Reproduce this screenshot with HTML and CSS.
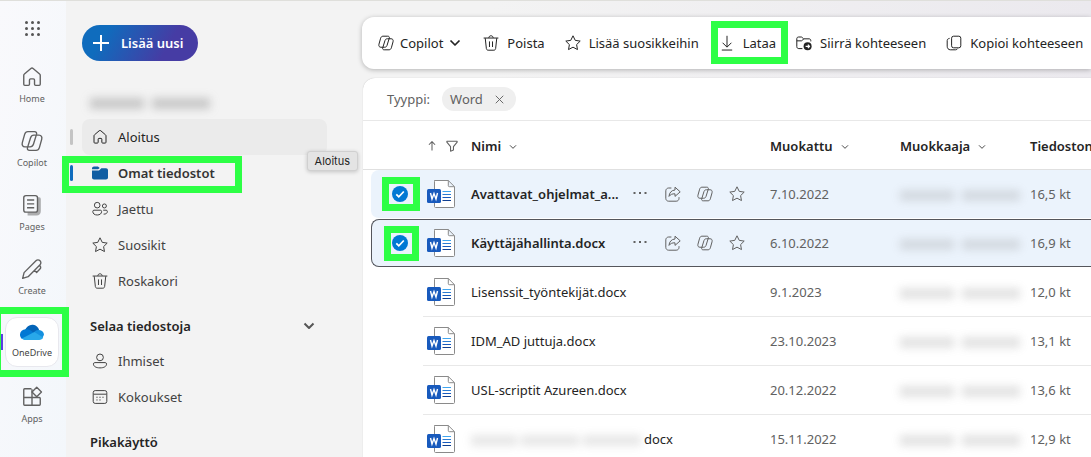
FILE: index.html
```html
<!DOCTYPE html>
<html lang="fi">
<head>
<meta charset="utf-8">
<title>OneDrive</title>
<link rel="stylesheet" href="styles.css">
</head>
<body>
<svg class="sprite" aria-hidden="true">
  <symbol id="i-home" viewBox="0 0 20 20"><path d="M2.500 8.600c0-.5.2-1 .6-1.300l5.900-5.100c.6-.5 1.400-.5 2 0l5.900 5.100c.4.300.6.800.6 1.300v8c0 .6-.4 1-1 1h-3.200c-.6 0-1-.4-1-1v-3.900c0-.6-.4-1-1-1H8.700c-.6 0-1 .4-1 1v3.900c0 .6-.4 1-1 1H3.500c-.6 0-1-.4-1-1z"/></symbol>
  <symbol id="i-copilot" viewBox="0 0 20 20"><path d="M6.300 1.500h5.900c1.700 0 2.300 1 1.900 2.500L11.300 13c-.5 1.500-1.400 2.300-3 2.300H3.600C1.600 15.300.6 13.700 1.200 11.500L3.300 4c.5-1.600 1.400-2.500 3-2.500zM13.700 18.500H7.800c-1.700 0-2.300-1-1.900-2.500L8.700 7c.5-1.500 1.400-2.300 3-2.300h4.700c2 0 3 1.600 2.400 3.800L16.700 16c-.5 1.600-1.400 2.500-3 2.500z"/></symbol>
  <symbol id="i-pages" viewBox="0 0 20 20"><path class="soft" d="M15.500 4.500h1v11c0 1.500-1 2.500-2.500 2.500H6"/><rect x="2.500" y="1.500" width="12.500" height="15" rx="2"/><path d="M5.500 5.500h6.500M5.500 9h6.500M5.500 12.500h6.500"/></symbol>
  <symbol id="i-pen" viewBox="0 0 20 20"><path d="M1.500 18.500l1.300-5.200L13.600 2.500a2.600 2.600 0 0 1 3.700 3.700L6.500 17zM12.300 11.200l1.900 1.900 3-3c.9-.9.900-2.100 0-3l-.8-.8"/></symbol>
  <symbol id="i-apps" viewBox="0 0 20 20"><path d="M9.500 2.500H3.300c-.5 0-.8.300-.8.800v13.400c0 .5.300.8.800.8h13.400c.5 0 .8-.3.800-.8v-5.400c0-.5-.3-.8-.8-.8H2.500M10 3v14.500"/><path class="paper" d="M14.300 1.200l4.300 4.300-4.300 4.300L10 5.500z"/></symbol>
  <symbol id="i-cloud" viewBox="0 0 24 16"><path fill="#0364b8" d="M5 6C6.500 2.500 9.500.3 13 .7c3 .3 5.400 2.500 6.100 5.300L14 10z"/><path fill="#0078d4" d="M5.500 5.300c2-.3 3.500.2 5.500 1.400l4 3L2 15C.7 14-.2 12.300 0 10.200.3 7.500 2.500 5.400 5.500 5.300z"/><path fill="#1490df" d="M14 8.200c1.500-1.800 3.200-2.400 5.100-2.200 2.800.3 4.900 2.300 4.900 4.700l-2 4z"/><path fill="#28a8ea" d="M2 14.400l12.300-6.300 8.900 5.400c-.7 1.500-2.200 2.500-4 2.500H5.500c-1.400 0-2.600-.6-3.500-1.600z"/></symbol>
  <symbol id="i-star" viewBox="0 0 20 20"><path d="M10 1l2.800 5.700 6.200.9-4.500 4.400 1.100 6.200L10 15.200l-5.600 3L5.500 12 1 7.600l6.200-.9z"/></symbol>
  <symbol id="i-trash" viewBox="0 0 20 20"><path d="M.8 3.800h18.400M7.300 3.600c0-3.500 5.400-3.500 5.400 0M2.800 4l1.400 13c.1 1.100 1 2 2.200 2h7.200c1.200 0 2.100-.9 2.200-2l1.400-13M8.100 8v7M11.900 8v7"/></symbol>
  <symbol id="i-people" viewBox="0 0 20 20"><circle cx="6.500" cy="5.200" r="3.500"/><circle cx="15.500" cy="6.200" r="2.500"/><path d="M2.500 11.500h8c.9 0 1.500.6 1.500 1.500 0 2.900-2.200 4.500-5.500 4.500S1 15.900 1 13c0-.9.600-1.500 1.500-1.500zM14 11.500h3.700c.8 0 1.500.6 1.500 1.400 0 2.400-1.800 3.700-4.700 3.500"/></symbol>
  <symbol id="i-person" viewBox="0 0 20 20"><circle cx="10" cy="5.500" r="4.200"/><path d="M3.500 12h13c1 0 1.700.7 1.700 1.600 0 3.200-3.200 5-8.200 5s-8.200-1.800-8.200-5c0-.9.700-1.600 1.700-1.600z"/></symbol>
  <symbol id="i-calendar" viewBox="0 0 20 20"><rect x="1.500" y="2" width="17" height="16" rx="2.500"/><path d="M2 6.500h16M5.500 10.300h1.500M9.200 10.300h1.600M13 10.300h1.500M5.500 13.700h1.500M9.200 13.700h1.600"/></symbol>
  <symbol id="i-folder" viewBox="0 0 20 20"><path class="brand" d="M0 5.200V4.300C0 2.800 1.200 1.800 2.500 1.800h4c.7 0 1.200.2 1.700.6l1.500 1.300-1.200 1c-.3.300-.6.500-1 .5zM0 6.900h7.600c.7 0 1.400-.3 1.900-.8L11.600 4.200h5.900c1.500 0 2.500 1.100 2.500 2.500v9c0 1.400-1.100 2.500-2.500 2.500h-15C1.100 18.200 0 17.100 0 15.700z"/></symbol>
  <symbol id="i-down" viewBox="0 0 20 20"><path d="M10 1v14M4.500 9.700L10 15.200l5.500-5.500M3.500 18.800h13"/></symbol>
  <symbol id="i-move" viewBox="0 0 20 20"><path d="M8 17H3.500C2 17 1 16 1 14.500v-10C1 3.300 2 2.500 3.200 2.500h3c.7 0 1 .1 1.500.6L9.500 4.800h6.800c1.400 0 2.200.9 2.200 2.200V8M1 7.300h5.500c.6 0 1-.1 1.500-.6l1.500-1.900"/><circle class="dark" cx="14.500" cy="14.200" r="5"/><path class="light" d="M12 14.200h4.700M14.800 12l2.200 2.200-2.200 2.200"/></symbol>
  <symbol id="i-copy" viewBox="0 0 20 20"><rect x="7" y="1.500" width="11.500" height="14.500" rx="2.500"/><path d="M4.500 4.200C2.500 4.500 1.500 5.500 1.500 7v7c0 2.700 1.500 4.500 4 4.500h6.500c1.200 0 2-.5 2.500-1.500"/></symbol>
  <symbol id="i-share" viewBox="0 0 20 20"><path d="M8 2.500H4.500C2.800 2.500 1 4 1 6v9.500C1 17.400 2.500 19 4.500 19H14c2 0 3.500-1.500 3.500-3.500V14"/><path d="M12.500 1.500l6.500 5.800-6.500 5.700V9.800c-3.500-.2-5.700.8-7.500 3.200.3-4.500 3-7.700 7.500-8z"/></symbol>
  <symbol id="i-chevron" viewBox="0 0 12 12"><path d="M1.500 3.500L6 8l4.500-4.500"/></symbol>
  <symbol id="i-close" viewBox="0 0 12 12"><path d="M1 1l10 10M11 1L1 11"/></symbol>
  <symbol id="i-up" viewBox="0 0 12 12"><path d="M6 11.500V1M2.300 4.500L6 .8l3.700 3.700"/></symbol>
  <symbol id="i-filter" viewBox="0 0 14 14"><path d="M1 1.500h12v1L8.700 7.800v4L5.300 13V7.800L1 2.500z"/></symbol>
  <symbol id="i-dots" viewBox="0 0 16 16"><path class="fill" d="M.5 6h2v2h-2zM6 6h2v2H6zM11.500 6h2v2h-2z"/></symbol>
  <symbol id="i-word" viewBox="0 0 28 28"><path fill="#fff" stroke="#8a8a8a" d="M7.500.5H21.300l6.200 6.200v19.800c0 .6-.4 1-1 1h-18c-.6 0-1-.4-1-1v-25c0-.6.400-1 1-1zM21.300.5v5.200c0 .6.400 1 1 1h5.200"/><path stroke="#41a5ee" d="M15.500 11.500h8.500"/><path stroke="#2b7cd3" d="M15.500 14.500h8.500"/><path stroke="#185abd" d="M15.500 17.500h8.500"/><path stroke="#103f91" d="M15.500 20.500h8.500"/><rect y="9" width="14" height="14" rx="1.500" fill="#185abd"/><path fill="none" stroke="#fff" stroke-width="1.400" d="M3.500 13L5 19l2-5.500L9 19l1.500-6"/></symbol>
  <symbol id="i-tick" viewBox="0 0 16 16"><path d="M4.300 8.300l2.500 2.500 5-5.300"/></symbol>
</svg>

<div class="app">
  <nav class="rail" aria-label="Sovellukset">
    <button class="waffle" type="button" aria-label="Sovellusvalikko"><i></i><i></i><i></i><i></i><i></i><i></i><i></i><i></i><i></i></button>
    <a class="rail-item" href="#"><svg class="icon"><use href="#i-home"/></svg>Home</a>
    <a class="rail-item" href="#"><svg class="icon"><use href="#i-copilot"/></svg>Copilot</a>
    <a class="rail-item" href="#"><svg class="icon"><use href="#i-pages"/></svg>Pages</a>
    <a class="rail-item" href="#"><svg class="icon"><use href="#i-pen"/></svg>Create</a>
    <a class="rail-item current" href="#" aria-current="page"><svg class="cloud"><use href="#i-cloud"/></svg>OneDrive</a>
    <a class="rail-item" href="#"><svg class="icon"><use href="#i-apps"/></svg>Apps</a>
  </nav>

  <aside class="sidebar">
    <button class="add" type="button"><svg class="plus" viewBox="0 0 16 16"><path d="M8 0v16M0 8h16"/></svg>Lisää uusi</button>
    <div class="owner"><span class="redacted"><i class="w-52"></i><i class="w-60"></i></span></div>
    <nav class="menu" aria-label="Tiedostot">
      <a class="menu-item hovered" href="#"><svg class="icon"><use href="#i-home"/></svg>Aloitus<span class="tooltip">Aloitus</span></a>
      <a class="menu-item selected" href="#"><svg class="icon"><use href="#i-folder"/></svg>Omat tiedostot</a>
      <a class="menu-item" href="#"><svg class="icon"><use href="#i-people"/></svg>Jaettu</a>
      <a class="menu-item" href="#"><svg class="icon"><use href="#i-star"/></svg>Suosikit</a>
      <a class="menu-item" href="#"><svg class="icon"><use href="#i-trash"/></svg>Roskakori</a>
      <button class="section" type="button">Selaa tiedostoja<svg class="chevron-lg"><use href="#i-chevron"/></svg></button>
      <a class="menu-item" href="#"><svg class="icon"><use href="#i-person"/></svg>Ihmiset</a>
      <a class="menu-item" href="#"><svg class="icon"><use href="#i-calendar"/></svg>Kokoukset</a>
      <h2 class="section">Pikakäyttö</h2>
    </nav>
  </aside>

  <main class="main">
    <div class="toolbar" role="toolbar" aria-label="Toiminnot">
      <button type="button"><svg class="icon"><use href="#i-copilot"/></svg>Copilot<svg class="chevron"><use href="#i-chevron"/></svg></button>
      <button type="button"><svg class="icon"><use href="#i-trash"/></svg>Poista</button>
      <button type="button"><svg class="icon"><use href="#i-star"/></svg>Lisää suosikkeihin</button>
      <button class="download" type="button"><svg class="icon"><use href="#i-down"/></svg>Lataa</button>
      <button type="button"><svg class="icon"><use href="#i-move"/></svg>Siirrä kohteeseen</button>
      <button type="button"><svg class="icon"><use href="#i-copy"/></svg>Kopioi kohteeseen</button>
    </div>

    <section class="card">
      <div class="filters">Tyyppi:<button class="chip" type="button">Word<svg><use href="#i-close"/></svg></button></div>
      <div class="files">
        <table>
          <colgroup><col class="c-check"><col class="c-icon"><col class="c-name"><col class="c-actions"><col class="c-date"><col class="c-editor"><col class="c-size"></colgroup>
          <thead>
            <tr>
              <th></th>
              <th><span class="sort"><svg class="up"><use href="#i-up"/></svg><svg class="funnel"><use href="#i-filter"/></svg></span></th>
              <th>Nimi<svg class="caret"><use href="#i-chevron"/></svg></th>
              <th></th>
              <th>Muokattu<svg class="caret"><use href="#i-chevron"/></svg></th>
              <th>Muokkaaja<svg class="caret"><use href="#i-chevron"/></svg></th>
              <th>Tiedoston</th>
            </tr>
          </thead>
          <tbody>
            <tr class="picked">
              <td><label class="check wide"><input type="checkbox" checked aria-label="Valitse Avattavat_ohjelmat"><svg><use href="#i-tick"/></svg></label></td>
              <td><svg class="word"><use href="#i-word"/></svg></td>
              <td class="name">Avattavat_ohjelmat_a...</td>
              <td><span class="actions"><button type="button" aria-label="Lisää"><svg class="icon"><use href="#i-dots"/></svg></button><button type="button" aria-label="Jaa"><svg class="icon"><use href="#i-share"/></svg></button><button type="button" aria-label="Copilot"><svg class="icon"><use href="#i-copilot"/></svg></button><button type="button" aria-label="Suosikki"><svg class="icon"><use href="#i-star"/></svg></button></span></td>
              <td>7.10.2022</td>
              <td><span class="redacted"><i class="w-52"></i><i class="w-60"></i></span></td>
              <td>16,5 kt</td>
            </tr>
            <tr class="picked focused">
              <td><label class="check"><input type="checkbox" checked aria-label="Valitse Käyttäjähallinta.docx"><svg><use href="#i-tick"/></svg></label></td>
              <td><svg class="word"><use href="#i-word"/></svg></td>
              <td class="name">Käyttäjähallinta.docx</td>
              <td><span class="actions"><button type="button" aria-label="Lisää"><svg class="icon"><use href="#i-dots"/></svg></button><button type="button" aria-label="Jaa"><svg class="icon"><use href="#i-share"/></svg></button><button type="button" aria-label="Copilot"><svg class="icon"><use href="#i-copilot"/></svg></button><button type="button" aria-label="Suosikki"><svg class="icon"><use href="#i-star"/></svg></button></span></td>
              <td>6.10.2022</td>
              <td><span class="redacted"><i class="w-52"></i><i class="w-60"></i></span></td>
              <td>16,9 kt</td>
            </tr>
            <tr>
              <td></td><td><svg class="word"><use href="#i-word"/></svg></td>
              <td class="name" colspan="2">Lisenssit_työntekijät.docx</td>
              <td>9.1.2023</td><td><span class="redacted"><i class="w-52"></i><i class="w-60"></i></span></td><td>12,0 kt</td>
            </tr>
            <tr>
              <td></td><td><svg class="word"><use href="#i-word"/></svg></td>
              <td class="name" colspan="2">IDM_AD juttuja.docx</td>
              <td>23.10.2023</td><td><span class="redacted"><i class="w-52"></i><i class="w-60"></i></span></td><td>13,1 kt</td>
            </tr>
            <tr>
              <td></td><td><svg class="word"><use href="#i-word"/></svg></td>
              <td class="name" colspan="2">USL-scriptit Azureen.docx</td>
              <td>20.12.2022</td><td><span class="redacted"><i class="w-52"></i><i class="w-60"></i></span></td><td>13,6 kt</td>
            </tr>
            <tr>
              <td></td><td><svg class="word"><use href="#i-word"/></svg></td>
              <td class="name" colspan="2"><span class="redacted"><i class="w-40"></i><i class="w-60"></i><i class="w-60"></i></span>docx</td>
              <td>15.11.2022</td><td><span class="redacted"><i class="w-52"></i><i class="w-60"></i></span></td><td>12,9 kt</td>
            </tr>
          </tbody>
        </table>
      </div>
    </section>
  </main>
</div>
</body>
</html>
```

FILE: styles.css
```css
*, ::before, ::after { box-sizing: border-box; }

:root {
  --marker: #2dff45;
  --line: #e8e8e8;
  --outline: #55565c;
}

body {
  margin: 0;
  overflow: hidden;
  font: 13px/20px "Noto Sans", "Open Sans", sans-serif;
  color: #424242;
}

button {
  padding: 0;
  border: 0;
  background: none;
  font: inherit;
  color: inherit;
  white-space: nowrap;
}

a { color: inherit; text-decoration: none; }
svg { display: block; flex: none; overflow: visible; }
.sprite { position: absolute; width: 0; height: 0; }

.icon, .chevron, .chevron-lg, .caret, .up, .funnel, .chip svg {
  fill: none;
  stroke: currentColor;
  stroke-width: 1.25;
  stroke-linejoin: round;
}
.icon { width: 16px; height: 16px; }
.soft { opacity: .5; stroke-width: 3; }
.paper { fill: #f6f8fb; }
.dark, .fill { fill: currentColor; stroke: none; }
.brand { fill: #115ea3; stroke: none; }
.light { stroke: #fff; stroke-width: 1.5; }

.app {
  display: flex;
  height: 100vh;
  overflow: hidden;
  border-top: 1px solid #dfdfdb;
  background: linear-gradient(90deg, #f3f3f3 45%, #ebe9ee);
}

/* App rail */
.rail {
  flex: none;
  display: flex;
  flex-direction: column;
  align-items: center;
  width: 66px;
  padding: 20px 2px 0 0;
  background: linear-gradient(100deg, #f9f9fc, #f3f7fb);
}
.waffle {
  display: grid;
  grid-template-columns: repeat(3, 3px);
  gap: 3px;
  margin-bottom: 25px;
}
.waffle i { width: 3px; height: 3px; border-radius: 50%; background: #555; }
.rail-item {
  flex: none;
  position: relative;
  display: flex;
  flex-direction: column;
  align-items: center;
  justify-content: center;
  gap: 4px;
  width: 54px;
  height: 50px;
  margin-bottom: 14px;
  font-size: 9px;
  line-height: 14px;
  color: #616161;
}
.rail-item .icon { width: 22px; height: 22px; }
.rail-item.current {
  gap: 6px;
  border: 1px solid #e8e8ee;
  border-radius: 12px;
  background: #fff;
  color: #424242;
}
.rail-item.current::before {
  content: "";
  position: absolute;
  left: -6px;
  width: 3px;
  height: 16px;
  background: #5b3fe0;
}
.rail-item.current::after {
  content: "";
  position: absolute;
  inset: -11px -11px -11px -12px;
  border: 7px solid var(--marker);
}
.cloud { width: 24px; height: 16px; }

/* Sidebar */
.sidebar {
  flex: none;
  width: 296px;
  padding: 24px 35px 0 16px;
}
.add {
  display: flex;
  align-items: center;
  gap: 12px;
  height: 36px;
  padding: 0 15px 0 11px;
  border-radius: 18px;
  background: linear-gradient(120deg, #0f6cbd 20%, #463ca4 72%);
  font-weight: 600;
  color: #fff;
}
.plus { width: 16px; height: 16px; stroke: #fff; stroke-width: 2; }
.owner { display: flex; align-items: center; height: 36px; margin: 24px 0 -2px 8px; }
.menu { display: flex; flex-direction: column; }
.menu-item {
  position: relative;
  display: flex;
  align-items: center;
  gap: 10px;
  height: 36px;
  padding: 0 10px;
  border-radius: 8px;
}
.menu-item.hovered { background: #ebebeb; color: #242424; }
.menu-item.selected { font-weight: 600; color: #333; }
.menu-item.hovered::before, .menu-item.selected::before {
  content: "";
  position: absolute;
  left: -12px;
  width: 3px;
  height: 16px;
  border-radius: 2px;
  background: #c4c4c4;
}
.menu-item.selected::before { background: #0f6cbd; }
.menu-item.selected::after {
  content: "";
  position: absolute;
  top: 1px;
  left: -20px;
  width: 180px;
  height: 37px;
  border: 7px solid var(--marker);
}
.tooltip {
  position: absolute;
  top: 32px;
  right: -31px;
  z-index: 2;
  padding: 0 7px;
  border: 1px solid #d0d0d0;
  border-radius: 3px;
  background: #e4e4e4;
  box-shadow: 0 1px 4px #0003;
  font: 11px/18px Inter, sans-serif;
}
.section {
  display: flex;
  align-items: center;
  justify-content: space-between;
  height: 36px;
  margin: 9px 0 0;
  padding: 0 12px 0 8px;
  font-size: 13px;
  font-weight: 600;
  color: #242424;
}
button.section { margin-bottom: -1px; }
.chevron-lg { width: 12px; height: 12px; stroke-width: 2; stroke: #555; }

/* Toolbar */
.main {
  flex: 1;
  min-width: 0;
  display: flex;
  flex-direction: column;
  gap: 9px;
  padding-top: 16px;
}
.toolbar {
  flex: none;
  display: flex;
  align-items: center;
  gap: 20px;
  height: 52px;
  padding-left: 16px;
  border-radius: 12px 0 0 12px;
  background: #fff;
  box-shadow: 0 1px 5px #0004;
  color: #242424;
}
.toolbar button { position: relative; display: flex; align-items: center; gap: 8px; }
.toolbar button:first-child { gap: 6px; margin-right: 2px; }
.chevron { width: 12px; height: 12px; stroke-width: 1.75; }
.download::after {
  content: "";
  position: absolute;
  inset: -12px -12px -11px -8px;
  border: 7px solid var(--marker);
}

/* File list */
.card {
  flex: 1;
  min-height: 0;
  margin-left: 1px;
  border-radius: 12px 0 0 0;
  background: #fff;
  box-shadow: 0 0 1px #0004;
}
.filters {
  display: flex;
  align-items: center;
  gap: 12px;
  height: 43px;
  padding-left: 24px;
  border-bottom: 1px solid var(--line);
  color: #616161;
}
.chip {
  display: flex;
  align-items: center;
  gap: 12px;
  height: 24px;
  padding: 0 12px 0 8px;
  border-radius: 12px;
  background: #efefef;
}
.chip svg { width: 9px; height: 9px; }
.files { padding-left: 8px; }
table { width: 100%; table-layout: fixed; border-spacing: 0; }
.c-check { width: 52px; }
.c-icon { width: 48px; }
.c-actions { width: 137px; }
.c-date, .c-editor { width: 130px; }
.c-size { width: 61px; }
th, td { padding: 0; text-align: left; white-space: nowrap; }
th {
  height: 49px;
  padding-top: 1px;
  border-bottom: 1px solid #e0e0e0;
  font-weight: 600;
  color: #242424;
}
th:first-child { position: relative; }
th:first-child::before {
  content: "";
  position: absolute;
  bottom: -1px;
  left: -8px;
  width: 8px;
  height: 1px;
  background: #e0e0e0;
}
.sort { display: flex; align-items: center; gap: 9px; padding-left: 4px; color: #616161; }
.up { width: 10px; height: 10px; }
.funnel { width: 12px; height: 12px; }
.caret { display: inline-block; width: 8px; height: 8px; margin-left: 8px; }
td { height: 49px; border-bottom: 1px solid var(--line); color: #616161; }
td:first-child { border-color: transparent; }
td.name { color: #242424; }
.word { width: 28px; height: 28px; margin-left: 4px; }
.picked td { border-color: #fff; background: #ebf3fc; }
.picked td:first-child { border-radius: 8px 0 0 8px; }
.picked .name { font-weight: 600; }
.focused td { box-shadow: inset 0 1px var(--outline), inset 0 -1px var(--outline); }
.focused td:first-child { position: relative; box-shadow: none; }
.focused td:first-child::before {
  content: "";
  position: absolute;
  inset: 0;
  border: 1px solid var(--outline);
  border-right: 0;
  border-radius: 8px 0 0 8px;
  pointer-events: none;
}
.check {
  position: relative;
  display: grid;
  width: 16px;
  margin-left: 21px;
}
.check input, .check svg { grid-area: 1 / 1; width: 16px; height: 16px; margin: 0; }
.check input { appearance: none; border-radius: 50%; background: #0078d4; }
.check svg { fill: none; stroke: #fff; stroke-width: 1.75; pointer-events: none; }
.check::after {
  content: "";
  position: absolute;
  inset: -9px -11px -10px -8px;
  border: 7px solid var(--marker);
}
.check.wide::after { inset: -9px -12px -9px -10px; }
.actions { display: flex; gap: 16px; }
.actions button { display: block; }

/* Obscured names */
.redacted { display: inline-flex; gap: 8px; filter: blur(4px); vertical-align: middle; }
.redacted i { height: 11px; background: #8886; }
.w-40 { width: 46px; }
.w-52 { width: 54px; }
.w-60 { width: 58px; }
td .redacted { opacity: .6; }
td.name .redacted { gap: 4px; margin-right: 3px; opacity: .5; }
```
